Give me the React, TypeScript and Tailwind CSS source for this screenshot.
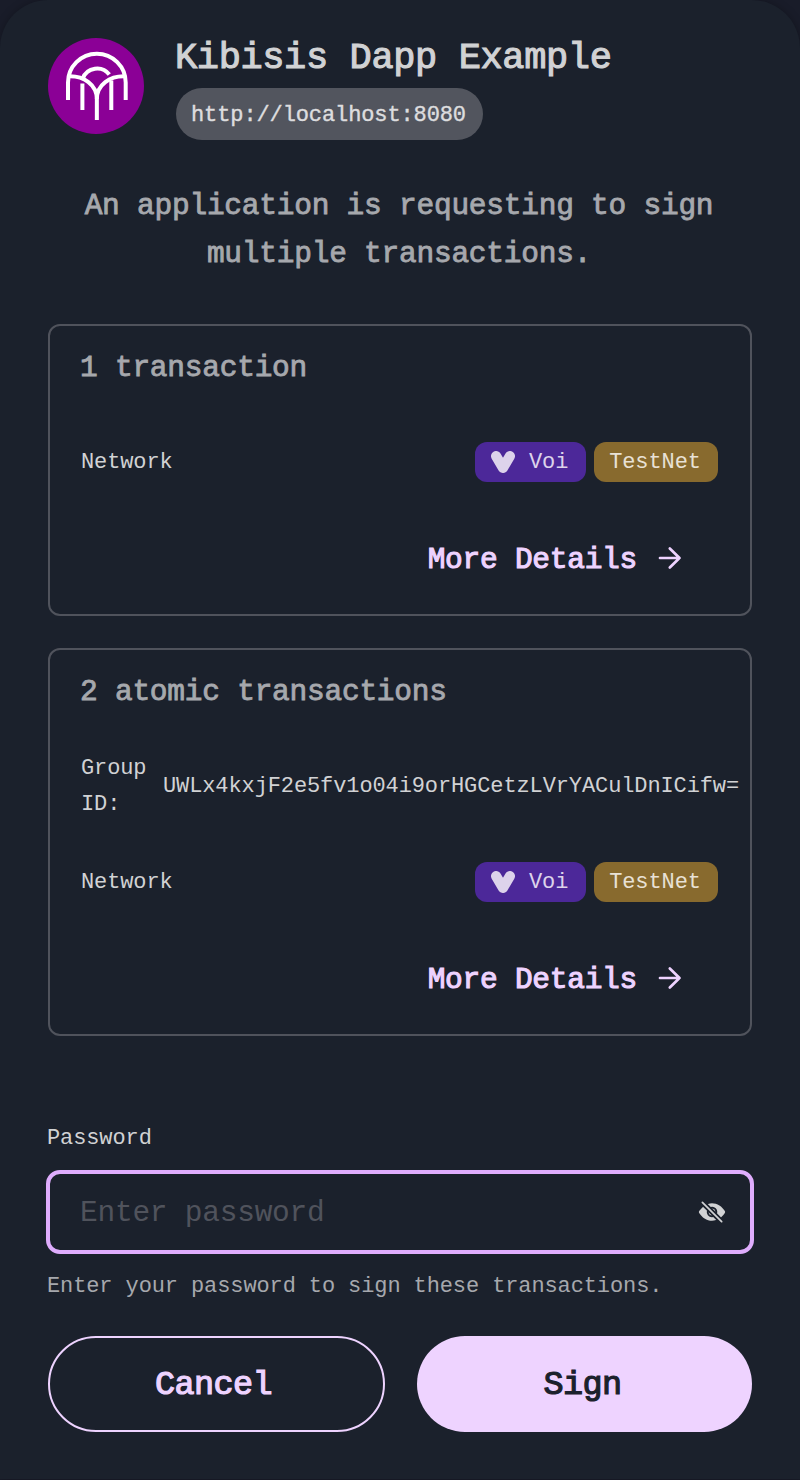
import { IoEyeOff } from "react-icons/io5";

const Logo = () => (
  <svg viewBox="0 0 96 96" className="size-24 shrink-0" fill="none" stroke="#fff" strokeWidth="4">
    <circle cx="48" cy="48" r="48" fill="#8b0096" stroke="none" />
    <path d="M20 62V44.500A28.850 28.850 0 0 1 77.700 44.500V62" />
    <path d="M20 38.300C36 37.500 48.850 47 48.850 61V82" />
    <path d="M77.700 38.300C61.700 37.500 48.850 47 48.850 61" />
    <path d="M34.700 40.500A15.400 15.400 0 0 1 61.300 36.500" />
    <path d="M34.400 45.500V72M63.300 42.500V72" />
  </svg>
);

const VoiIcon = () => (
  <svg viewBox="0 0 24 22" className="h-[22px] w-6" fill="none" stroke="#ddd3eb" strokeWidth="10.2" strokeLinecap="round" strokeLinejoin="round">
    <path d="M5.100 5.100L12 16.900L18.900 5.100" />
  </svg>
);

const ArrowIcon = () => (
  <svg viewBox="0 0 24 24" className="size-6" fill="none" stroke="currentColor" strokeWidth="2.700" strokeLinecap="round" strokeLinejoin="round">
    <path d="M2 12H21.500M11.800 2.500L21.500 12L11.800 21.500" />
  </svg>
);

const small = "font-['Liberation_Mono',monospace] text-[22px] tracking-[-0.110px]";
const medium =
  "font-['Liberation_Mono',monospace] text-[29.500px] leading-12 tracking-[-0.240px] [-webkit-text-stroke:0.850px]";

function NetworkRow() {
  return (
    <div className="flex h-10 items-center justify-between pl-[31px] pr-8">
      <span className={`${small} pt-px text-[#d1d2d4]`}>Network</span>
      <div className="flex gap-2">
        <span className={`${small} flex h-10 w-[111px] items-center gap-[15px] rounded-xl bg-[#4c2899] pl-4 text-[#ddd3eb]`}>
          <VoiIcon />
          <span className="-ml-px pt-px">Voi</span>
        </span>
        <span className={`${small} flex h-10 w-[124px] items-center justify-center rounded-xl bg-[#886a2e] pt-px pr-0.5 text-[#e8e1d5]`}>
          TestNet
        </span>
      </div>
    </div>
  );
}

function MoreDetails() {
  return (
    <button className="mt-13 mr-[68px] ml-auto flex h-12 items-center gap-[21px] text-[#eed3ff]">
      <span className="pt-1 font-['Liberation_Mono',monospace] text-[29.500px] leading-12 tracking-[-0.260px] [-webkit-text-stroke:1.100px]">
        More Details
      </span>
      <ArrowIcon />
    </button>
  );
}

export default function App() {
  return (
    <div className="h-[1480px] w-[800px] overflow-hidden bg-[#191c29]">
      <main className="flex h-[1479px] flex-col rounded-t-[48px] bg-[#1b212c] px-12 shadow-[0_0_8px_rgba(0,0,0,0.250)]">
        <header className="flex h-[140px] gap-8 pt-[38px]">
          <Logo />
          <div className="-mt-1.5 flex flex-col items-start gap-2">
            <h1 className="-ml-px pt-1 font-['Liberation_Mono',monospace] text-[37px] leading-[44px] tracking-[-0.380px] text-[#d1d2d4] [-webkit-text-stroke:1.100px]">
              Kibisis Dapp Example
            </h1>
            <span className="flex h-[52px] w-[307px] items-center justify-center rounded-full bg-[#52555e] pt-0.5 pr-0.5 font-['Liberation_Mono',monospace] text-[22px] tracking-[-0.110px] text-[#dddddf] [-webkit-text-stroke:0.400px]">
              http://localhost:8080
            </span>
          </div>
        </header>

        <p className={`${medium} mt-[42px] pr-0.5 text-center text-[#a6a8ad]`}>
          An application is requesting to sign
          <br />
          multiple transactions.
        </p>

        <section className="mt-[46px] flex h-[292px] shrink-0 flex-col rounded-xl border-2 border-[#50535c] pt-[18px]">
          <h2 className={`${medium} mb-[50px] pl-[30px] text-[#a6a8ad]`}>1 transaction</h2>
          <NetworkRow />
          <MoreDetails />
        </section>

        <section className="mt-8 flex h-[388px] shrink-0 flex-col rounded-xl border-2 border-[#50535c] pt-[18px]">
          <h2 className={`${medium} pl-[30px] text-[#a6a8ad]`}>2 atomic transactions</h2>
          <div className="mt-[35px] mb-[39px] flex h-18 items-center gap-4 pl-[31px] text-[#d1d2d4]">
            <span className={`${small} w-[66px] shrink-0 leading-9`}>Group ID:</span>
            <span className={`${small} pb-0.5 whitespace-nowrap`}>UWLx4kxjF2e5fv1o04i9orHGCetzLVrYACulDnICifw=</span>
          </div>
          <NetworkRow />
          <MoreDetails />
        </section>

        <label className={`${small} mt-[85px] -ml-px leading-9 text-[#d1d2d4]`}>Password</label>
        <div className="-mx-0.5 mt-[13px] flex h-[84px] shrink-0 items-center justify-between rounded-[14px] border-4 border-[#dfadfd] pr-6 pl-[30px]">
          <input
            type="password"
            placeholder="Enter password"
            className="w-[400px] bg-transparent pt-0.5 font-['Liberation_Mono',monospace] text-[29.500px] tracking-[-0.240px] text-[#d1d2d4] outline-none placeholder:text-[#50535c]"
          />
          <IoEyeOff className="size-7 text-[#d1d2d4]" />
        </div>
        <p className={`${small} mt-[15px] -ml-px leading-9 text-[#a6a8ad]`}>
          Enter your password to sign these transactions.
        </p>

        <div className="mt-[31px] flex h-24 shrink-0 gap-8 font-['Liberation_Mono',monospace] text-[33.500px] tracking-[-0.600px] [-webkit-text-stroke:1.200px]">
          <button className="w-[337px] rounded-full border-2 border-[#eed3ff] pt-0.5 pr-1.5 text-[#eed3ff]">Cancel</button>
          <button className="w-[335px] rounded-full bg-[#eed3ff] pt-0.5 pr-1 text-[#1b212c]">Sign</button>
        </div>
      </main>
    </div>
  );
}
